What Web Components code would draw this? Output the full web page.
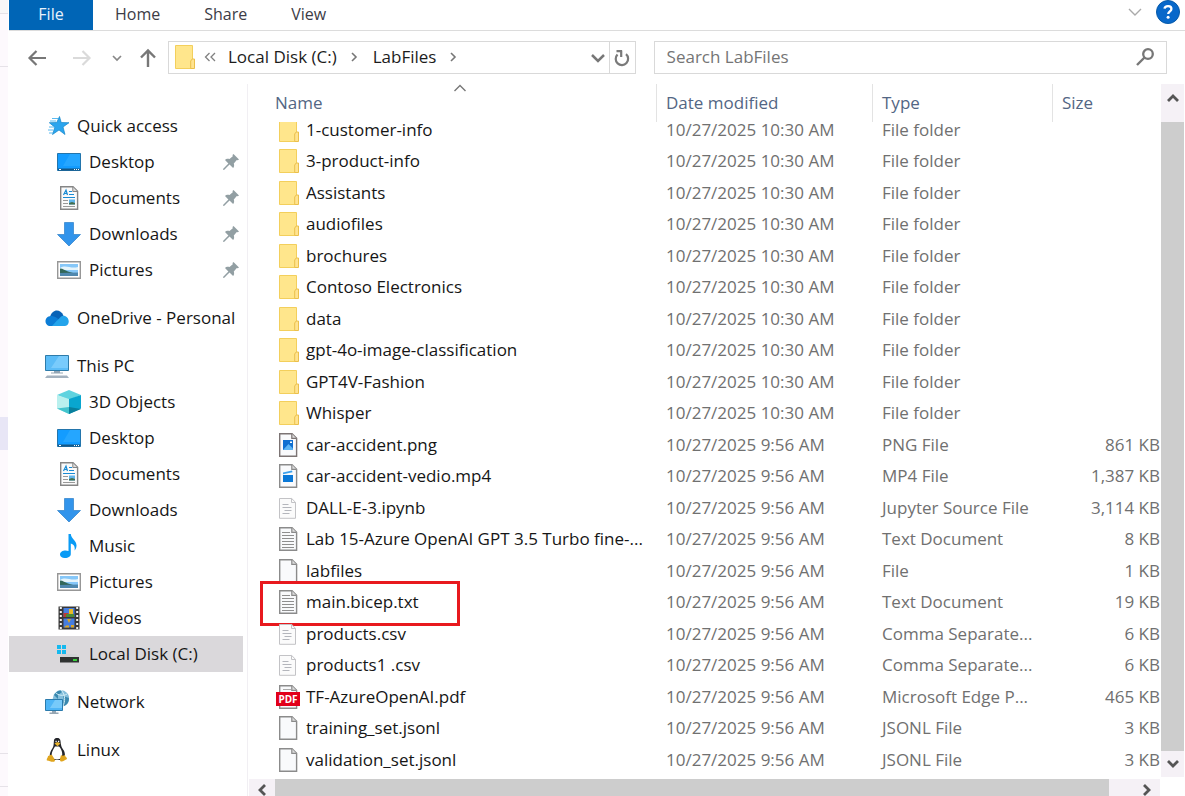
<!DOCTYPE html>
<html lang="en">
<head>
<meta charset="utf-8">
<title>LabFiles</title>
<style>
  body { margin: 0; height: 100vh; overflow: hidden; background: #fff; }
</style>
</head>
<body>
<file-explorer></file-explorer>
<script>
const paper = (inner, stroke = '#8b8b8b') =>
  `<path d="M3.7 .7H16l4.6 4.6v18H3.7z" fill="#f9fafc" stroke="${stroke}" stroke-width="1.4"/><path d="M15.8 .8v4.6h4.7" fill="#ddd" stroke="${stroke}" stroke-width="1.2"/>${inner}`;
const lightPaper = `<path d="M3.5 2.5h12.2l3.8 3.8v16h-16z" fill="#fbfbfb" stroke="#c3c3c6"/><path d="M15.5 2.5v4h4" fill="none" stroke="#c3c3c6"/><path d="M6.500 8.500h6M6.500 11.500h9M8.500 14.500h7M6.500 17.500h7" stroke="#b4b6bc"/>`;
const sheetLines = '<path d="M6 5.500h8M6 8.500h12M6 11.500h12M6 14.500h12M6 17.500h12M6 20.500h12" stroke="#8f8f8f"/>';

const ICONS = {
  folder: [24, '<path d="M3.500 .5h17v23h-17z" fill="#ffe68c" stroke="#f3cf5c"/><path d="M18.700 23.500v-7.500l1.500-2h2.300v9.500z" fill="#ffe390" stroke="#ebc04c"/>'],
  png: [24, paper('<rect x="7" y="7" width="10" height="10" fill="#0f6fd1"/><path d="M7 17l5.500-6L17 15.500V17z" fill="#5db5f5"/><path d="M14 8l1 1 1-1v2h-2z" fill="#fff"/>', '#7c7474')],
  mp4: [24, paper('<path d="M7 11h10v7H7z" fill="#0a78d7"/><path d="M7 8.500l9-2 .5 1.800L7 10.300z" fill="#3ba0ec"/>')],
  script: [24, lightPaper],
  text: [24, paper(sheetLines)],
  file: [24, paper('')],
  pdf: [24, paper('<path d="M7 4.500h8" stroke="#aaa"/><rect y="7" width="24" height="14" fill="#e2001a"/><text x="12" y="17.500" text-anchor="middle" font-family="Open Sans, sans-serif" font-size="10" font-weight="700" fill="#fff">PDF</text>')],
  star: [24, '<path d="M14.500 2.500l1.700 6 7.800.200-6 4.300 2 7.500-6-4.500-6.500 4.500 2.300-7.300-5.500-4.500 7.400-.200z" fill="#2ba5ee" stroke="#1485c8" stroke-width=".7"/><path d="M7 4.500h6M5 7h6M4 13h5M3 16h5M4 19h4" stroke="#5bbaf0"/>'],
  desktop: [24, '<path d="M.5 3.500h23v17H.5z" fill="#139cff" stroke="#2375ac"/><path d="M13 4L23 4v12H6z" fill="#32adff" opacity=".6"/><path d="M1 18.500h22v2H1z" fill="#155785"/><path d="M2 19.500h2M17 19.500h1M19 19.500h1M21 19.500h1" stroke="#fff"/>'],
  documents: [24, `<path d="M3.700 .7H16l4.600 4.600v18H3.700z" fill="#fafafa" stroke="#858585" stroke-width="1.400"/><path d="M15.800 1v4.500h4.500" fill="#ddd" stroke="#858585"/><path d="M6.500 9l2.500-5 1.500 5M7 7.500h3.500M12 5.500h3M12 8.500h5M6 11.500h12" stroke="#198bd4" stroke-width="1.200" fill="none"/><path d="M6 14.500h5M6 17.500h5M6 20.500h12" stroke="#999"/><path d="M12 13.500h6v5h-6z" fill="#60b5eb"/><path d="M12 17l3-1 3 1v1.500h-6z" fill="#456d4d"/>`],
  downloads: [24, '<path d="M7.500 .5h9v12h7L12 24 .5 12.500h7z" fill="#3294eb" stroke="#2c7fc9" stroke-width=".7"/>'],
  pictures: [24, '<path d="M.7 3.700h22.600v16.600H.7z" fill="#fff" stroke="#979797" stroke-width="1.400"/><path d="M3 6h18v12H3z" fill="#86c7f8"/><path d="M3 10c6-4 10 1 18-1v3H3z" fill="#e5f4fb"/><path d="M3 10.500c3 0 5 2 8 3l7 2H3z" fill="#33685a"/><path d="M3 15l18-.500V18H3z" fill="#5088ae"/>'],
  onedrive: [24, '<path d="M5 11C7 3 15 2 18.500 9.500L13 15z" fill="#0862b6"/><path d="M5.500 20C-1 20-1.500 10.500 6 10c3-.500 6 2 9 4l-5 6z" fill="#0c7dd6"/><path d="M7 20l5-5.500c3-2 4-6 8-4.500 5 2 5 9.500 0 10z" fill="#24a4eb"/>'],
  pc: [24, '<path d="M.5 1.500h23v15H.5z" fill="#5bbcf7" stroke="#2e7ba9"/><path d="M14 2h9v12H6z" fill="#8dd5ff" opacity=".6"/><path d="M9 17h6v1.500h3v1H6v-1h3z" fill="#93a5b4"/><path d="M2 21.500h20l2 2.500H0z" fill="#a4b2bf"/>'],
  cube: [24, '<path d="M0 5L12 0l12 5-12 5z" fill="#5fd3df"/><path d="M0 5l12 4v15L0 18.500z" fill="#b9f0ee"/><path d="M24 5l-12 4v15l12-5.500z" fill="#09a6cf"/><path d="M12 17l12 2-12 5z" fill="#087f9c"/><path d="M12 17L0 18.500 12 24z" fill="#43c4cd"/>'],
  music: [24, '<path d="M11.500 0h2.300c.500 5 6.200 7 5.700 12-.200 2-1 3.500-2 4.500.800-4-.500-6-3.700-7V20c0 5-10.800 5.500-10.800.500 0-3.500 5-5 8.500-3.500z" fill="#0a9bf5"/>'],
  videos: [24, '<path d="M1.500 .5h21v23h-21z" fill="#383838"/><path d="M6.500 2h11v9h-11zM6.500 12.500h11v9h-11z" fill="#467dde"/><path d="M3.800 1v23M20.200 1v23" stroke="#f0f0f0" stroke-width="2" stroke-dasharray="2 2"/><path d="M6.500 7h5v4h-5z" fill="#bd3a35"/><path d="M12 3h4v6h-4z" fill="#e9bb26"/><path d="M9 8h8v3H9z" fill="#4a8b35"/><path d="M10 13h4l-2 4zM7 21.500l2-2h3v2zM14 19h3v2.500h-3z" fill="#dda522"/>'],
  disk: [24, '<path d="M0 3h4v4H0zM5 3h4v4H5zM0 8h4v4H0zM5 8h4v4H5z" fill="#15b9ef"/><path d="M3 15l2-3h14l3 3z" fill="#d2d4d6"/><path d="M3 15h19v5.500H3z" fill="#303332"/><path d="M16 17h4v2h-4z" fill="#38d13c"/>'],
  network: [24, '<circle cx="16" cy="8.500" r="8.200" fill="#84bedb"/><path d="M9 5c4-6 8-5 8-3l-4 3v4zM18 6l6 2c0 4-2 7-5 8-2-3 1-5-1-10z" fill="#3a88ae"/><path d="M10 2c3 4 9 4 12 2M16 0c5 5 4 12 2 16" stroke="#d1edf5" fill="none"/><path d="M.5 9.500h17v11H.5z" fill="#4eb5f6" stroke="#2b7bac"/><path d="M10 10h7v8H5z" fill="#92d8fd" opacity=".6"/><path d="M7 21h4v1.500h2.500V24h-9v-1.500H7z" fill="#96a6b3"/>'],
  linux: [24, '<path d="M9 2c1-3 6-3 6.500 1 .5 5 1 6 3 9 2 3 2 8-1 10H7c-3-2-3-7 0-11 2-3 1.500-4 2-9z" fill="#24252a"/><path d="M10 8.500c-2 3-4 7-3 10 1 4 9 4 10 0 1-4-1-8-3-10z" fill="#fff"/><path d="M10.500 3.500h1.200M13 3.500h1.200" stroke="#fff" stroke-width="1.300"/><path d="M9.500 5.500l3-1.500 3 1.500-3 2.700z" fill="#e6b12c"/><path d="M3 18c2 0 2-2 4-1 1 2 3 4 3 6-2 2-5 0-8-.500C1 21 3 20 3 18zM16 17c1 1 2 1 4 0 0 2 2 2 2 4-2 1-4 3-6 2.500-2-1-.500-4 0-6.500z" fill="#e0a51e"/>'],
  pin: [16, '<path d="M10.500 0l5.500 5.500-1.200.700-1-.300-3 3.500c.700 2 .200 3.600-.700 4.600L6.500 10.500 1 16l-1-.500L0 15l5.400-5.600L2 6c1-1.200 3-1.500 4.500-.900l3.300-2.800-.300-1.200z" fill="#929fa3"/>'],
  back: [20, '<path d="M19 10H2.500M9.500 3L2.500 10l7 7" fill="none" stroke="#777" stroke-width="2.200"/>'],
  forward: [20, '<path d="M1 10h16.500M10.500 3l7 7-7 7" fill="none" stroke="#dadada" stroke-width="2.200"/>'],
  up: [20, '<path d="M10 19V2.500M3 9.500l7-7 7 7" fill="none" stroke="#777" stroke-width="2.400"/>'],
  down: [10, '<path d="M1 3l4 4 4-4" fill="none" stroke="#888" stroke-width="1.700"/>'],
  drop: [16, '<path d="M2 5l6 6 6-6" fill="none" stroke="#777" stroke-width="2.500"/>'],
  expand: [16, '<path d="M2 5l6 6 6-6" fill="none" stroke="#aaa" stroke-width="1.400"/>'],
  crumb: [10, '<path d="M3 1l4 4-4 4" fill="none" stroke="#777" stroke-width="1.600"/>'],
  more: [12, '<path d="M5.500 2l-4 4 4 4M11 2L7 6l4 4" fill="none" stroke="#808080" stroke-width="1.300"/>'],
  sort: [14, '<path d="M1.500 10L7 4.500l5.500 5.500" fill="none" stroke="#777" stroke-width="1.400"/>'],
  refresh: [18, '<path d="M13 5.200A6.200 6.200 0 1 1 4.500 5.500" fill="none" stroke="#7a7a7a" stroke-width="2.200"/><path d="M3.500 2.200H9M8.200 1.500V8" fill="none" stroke="#7a7a7a" stroke-width="2.200"/>'],
  search: [20, '<circle cx="13" cy="7" r="4.800" fill="none" stroke="#777" stroke-width="2.300"/><path d="M9.500 10.500L2 18" stroke="#777" stroke-width="2.400"/>'],
  help: [24, '<circle cx="12" cy="12" r="11.500" fill="#0868ca" stroke="#075aa9"/><path d="M8.500 8.700c.5-3.500 7-3.300 6.900.2 0 2.300-3.200 2.500-3.200 5.200" fill="none" stroke="#fff" stroke-width="2.300"/><circle cx="12.100" cy="17.300" r="1.500" fill="#fff"/>'],
  sup: [14, '<path d="M2 10l5-5 5 5" fill="none" stroke="#555" stroke-width="2.800"/>'],
  sdown: [14, '<path d="M2 4l5 5 5-5" fill="none" stroke="#555" stroke-width="2.800"/>'],
  sleft: [14, '<path d="M10 2L5 7l5 5" fill="none" stroke="#555" stroke-width="2.800"/>'],
  sright: [14, '<path d="M4 2l5 5-5 5" fill="none" stroke="#555" stroke-width="2.800"/>']
};

const BUTTON = 'button{font:inherit;color:inherit;background:none;border:0;margin:0;padding:0;display:flex;align-items:center;justify-content:center}';

class Base extends HTMLElement {
  connectedCallback() {
    if (this.shadowRoot) return;
    this.attachShadow({ mode: 'open' }).innerHTML = this.view();
    this.ready();
  }
  view() { return ''; }
  ready() {}
}

class UiIcon extends Base {
  view() {
    const [size, body] = ICONS[this.getAttribute('name')];
    return `<style>:host{display:block;flex:none;width:${size}px;height:${size}px}svg{display:block}</style>
      <svg width="${size}" height="${size}" viewBox="0 0 ${size} ${size}" aria-hidden="true">${body}</svg>`;
  }
}
customElements.define('ui-icon', UiIcon);

class RibbonTabs extends Base {
  view() {
    return `<style>
      :host{display:flex;height:30px;border-bottom:1px solid #dcdcdc;font-size:16px;line-height:24px;color:#3c3c46}
      ${BUTTON}
      nav{display:flex;flex:1}
      nav button{padding:0 22px 3px}
      nav .file{width:84px;background:#0065b6;color:#e8f2fb;padding:0 0 3px}
      .tools{display:flex;align-items:flex-start;gap:13px;padding-right:5px}
      .tools button{height:24px}
      </style>
      <nav><button class="file">File</button><button>Home</button><button>Share</button><button>View</button></nav>
      <div class="tools"><button aria-label="Expand ribbon"><ui-icon name="expand"></ui-icon></button>
      <button aria-label="Help"><ui-icon name="help"></ui-icon></button></div>`;
  }
}
customElements.define('ribbon-tabs', RibbonTabs);

class AddressBar extends Base {
  view() {
    return `<style>
      :host{display:grid;grid-template-columns:159px minmax(0,468fr) minmax(0,513fr);padding:10px 18px 10px 0;height:33px;line-height:24px;color:#1c1c1c}
      ${BUTTON}
      .history{display:flex;align-items:center;box-sizing:border-box;padding-left:18px;gap:25px}
      .history .near{margin:0 -9px 0 -5px}
      .path,.search{display:flex;align-items:center;border:1px solid #d9d9d9;box-sizing:border-box;min-width:0}
      .path{padding-left:3px;margin-right:9px}
      .path>*{padding-bottom:2px}
      .path .more{margin:0 12px 0 8px}
      .path .sep{margin:0 14px 0 12px}
      .path .drop{margin-left:auto;padding:0 3px}
      .path .refresh{border-left:1px solid #d9d9d9;width:26px;align-self:stretch;padding:0}
      .search{margin-left:9px;padding:0 11px 2px 12px}
      input{flex:1;min-width:0;border:0;outline:0;padding:0;font:inherit;color:#333;background:none}
      input::placeholder{color:#757575;opacity:1}
      </style>
      <div class="history">
        <button aria-label="Back"><ui-icon name="back"></ui-icon></button>
        <button aria-label="Forward"><ui-icon name="forward"></ui-icon></button>
        <button class="near" aria-label="Recent locations"><ui-icon name="down"></ui-icon></button>
        <button aria-label="Up"><ui-icon name="up"></ui-icon></button>
      </div>
      <div class="path">
        <ui-icon name="folder"></ui-icon>
        <button class="more" aria-label="Parent folders"><ui-icon name="more"></ui-icon></button>
        <button>Local Disk (C:)</button><ui-icon class="sep" name="crumb"></ui-icon>
        <button>LabFiles</button><ui-icon class="sep" name="crumb"></ui-icon>
        <button class="drop" aria-label="Previous locations"><ui-icon name="drop"></ui-icon></button>
        <button class="refresh" aria-label="Refresh"><ui-icon name="refresh"></ui-icon></button>
      </div>
      <div class="search"><input type="text" aria-label="Search LabFiles" placeholder="Search LabFiles"><ui-icon name="search"></ui-icon></div>`;
  }
}
customElements.define('address-bar', AddressBar);

class TreeItem extends Base {
  view() {
    return `<style>
      :host{display:block;color:#161616}
      :host([gap]){margin-top:12px}
      a{display:flex;align-items:center;gap:8px;height:36px;padding:0 4px 0 36px;color:inherit;text-decoration:none;white-space:nowrap}
      :host([child]) a{padding-left:48px}
      :host([selected]) a{background:#dad8db}
      span{flex:1}
      </style>
      <a href="#"><ui-icon name="${this.getAttribute('icon')}"></ui-icon><span><slot></slot></span>${this.hasAttribute('pinned') ? '<ui-icon name="pin"></ui-icon>' : ''}</a>`;
  }
}
customElements.define('tree-item', TreeItem);

class FolderTree extends Base {
  view() {
    return `<style>:host{display:block;box-sizing:border-box;padding:24px 4px 0 0;border-right:1px solid #f1eff3;overflow:hidden}</style>
      <nav>
      <tree-item icon="star">Quick access</tree-item>
      <tree-item child pinned icon="desktop">Desktop</tree-item>
      <tree-item child pinned icon="documents">Documents</tree-item>
      <tree-item child pinned icon="downloads">Downloads</tree-item>
      <tree-item child pinned icon="pictures">Pictures</tree-item>
      <tree-item gap icon="onedrive">OneDrive - Personal</tree-item>
      <tree-item gap icon="pc">This PC</tree-item>
      <tree-item child icon="cube">3D Objects</tree-item>
      <tree-item child icon="desktop">Desktop</tree-item>
      <tree-item child icon="documents">Documents</tree-item>
      <tree-item child icon="downloads">Downloads</tree-item>
      <tree-item child icon="music">Music</tree-item>
      <tree-item child icon="pictures">Pictures</tree-item>
      <tree-item child icon="videos">Videos</tree-item>
      <tree-item child selected icon="disk">Local Disk (C:)</tree-item>
      <tree-item gap icon="network">Network</tree-item>
      <tree-item gap icon="linux">Linux</tree-item>
      </nav>`;
  }
}
customElements.define('folder-tree', FolderTree);

const early = '10/27/2025 9:56 AM';
const FILES = [
  ...['1-customer-info', '3-product-info', 'Assistants', 'audiofiles', 'brochures', 'Contoso Electronics', 'data',
    'gpt-4o-image-classification', 'GPT4V-Fashion', 'Whisper'].map(n => ['folder', n, '10/27/2025 10:30 AM', 'File folder', '']),
  ['png', 'car-accident.png', early, 'PNG File', '861 KB'],
  ['mp4', 'car-accident-vedio.mp4', early, 'MP4 File', '1,387 KB'],
  ['script', 'DALL-E-3.ipynb', early, 'Jupyter Source File', '3,114 KB'],
  ['text', 'Lab 15-Azure OpenAI GPT 3.5 Turbo fine-...', early, 'Text Document', '8 KB'],
  ['file', 'labfiles', early, 'File', '1 KB'],
  ['text', 'main.bicep.txt', early, 'Text Document', '19 KB', true],
  ['script', 'products.csv', early, 'Comma Separate...', '6 KB'],
  ['script', 'products1 .csv', early, 'Comma Separate...', '6 KB'],
  ['pdf', 'TF-AzureOpenAI.pdf', early, 'Microsoft Edge P...', '465 KB'],
  ['file', 'training_set.jsonl', early, 'JSONL File', '3 KB'],
  ['file', 'validation_set.jsonl', early, 'JSONL File', '3 KB']
];

class FileTable extends Base {
  view() {
    return `<style>
      :host{display:block;overflow:hidden;min-height:0;padding-bottom:8px;box-sizing:border-box}
      table{width:100%;table-layout:fixed;border-spacing:0;color:#707070}
      th{position:sticky;top:0;z-index:1;box-sizing:border-box;height:38px;padding:0 0 0 9px;border-left:1px solid #e3e3e3;background:#fff;font-weight:400;text-align:left;color:#536684}
      th:first-child{border:0;padding-left:26px}
      th ui-icon{position:absolute;left:50%;top:-3px}
      .date{width:216px}.type{width:180px}.size{width:108px}
      tr{height:31px}
      tbody tr:nth-child(even){height:32px}
      td{padding:0 0 0 10px;white-space:nowrap;line-height:24px}
      td:first-child{padding-left:27px;color:#161616;position:relative}
      td:last-child{padding:0;text-align:right}
      .name{display:flex;align-items:center;gap:6px}
      mark{position:absolute;left:11px;top:-5px;bottom:-8px;width:200px;box-sizing:border-box;border:3px solid #e8191e;background:none}
      </style>
      <table>
      <thead><tr><th>Name<ui-icon name="sort"></ui-icon></th><th class="date">Date modified</th><th class="type">Type</th><th class="size">Size</th></tr></thead>
      <tbody>${FILES.map(([icon, name, date, type, size, marked]) =>
        `<tr><td><div class="name"><ui-icon name="${icon}"></ui-icon><span>${name}</span></div>${marked ? '<mark></mark>' : ''}</td><td>${date}</td><td>${type}</td><td>${size}</td></tr>`).join('')}</tbody>
      </table>`;
  }
  ready() { this.scrollTop = 8; }
}
customElements.define('file-table', FileTable);

class ScrollTrack extends Base {
  view() {
    const across = this.hasAttribute('horizontal');
    return `<style>
      :host{display:flex;flex-direction:${across ? 'row' : 'column'};background:#f5f1f6}
      ${BUTTON}
      .thumb{flex:1;background:#cdcdcd}
      .start{${across ? 'width:26px' : 'height:38px;padding-bottom:10px;box-sizing:border-box'}}
      .end{${across ? 'width:51px;padding-left:24px;box-sizing:border-box' : 'height:26px'}}
      </style>
      <button class="start" aria-label="Scroll back"><ui-icon name="${across ? 'sleft' : 'sup'}"></ui-icon></button>
      <div class="thumb"></div>
      <button class="end" aria-label="Scroll on"><ui-icon name="${across ? 'sright' : 'sdown'}"></ui-icon></button>`;
  }
}
customElements.define('scroll-track', ScrollTrack);

class FileExplorer extends Base {
  view() {
    return `<style>
      :host{display:grid;grid-template-columns:9px minmax(0,1fr);height:100%;font-family:"Open Sans","Noto Sans",sans-serif;font-size:17px;line-height:24px}
      .edge{display:flex;flex-direction:column;background:#fdf9fd;border-right:1px solid #fff}
      .edge i{border-bottom:1px solid #e6e2e8}
      .edge i:nth-child(1){height:13px;background:#f8f7f8}
      .edge i:nth-child(2){height:52px}
      .edge i:nth-child(3){height:350px;border:0}
      .edge i:nth-child(4){height:33px;background:#e8e6f6;border:0}
      .edge i:nth-child(5){height:303px}
      .edge i:nth-child(6){height:32px}
      .window{display:flex;flex-direction:column;min-height:0}
      .panes{flex:1;display:grid;grid-template-columns:239px minmax(0,1fr);column-gap:1px;min-height:0}
      .list{display:grid;grid-template-columns:minmax(0,1fr) 23px;grid-template-rows:minmax(0,1fr) 22px;gap:2px 1px;padding-right:1px;margin-bottom:-5px;min-height:0}
      </style>
      <div class="edge"><i></i><i></i><i></i><i></i><i></i><i></i></div>
      <div class="window">
        <ribbon-tabs></ribbon-tabs>
        <address-bar></address-bar>
        <div class="panes">
          <folder-tree></folder-tree>
          <div class="list">
            <file-table></file-table><scroll-track></scroll-track>
            <scroll-track horizontal></scroll-track>
          </div>
        </div>
      </div>`;
  }
}
customElements.define('file-explorer', FileExplorer);
</script>
</body>
</html>
